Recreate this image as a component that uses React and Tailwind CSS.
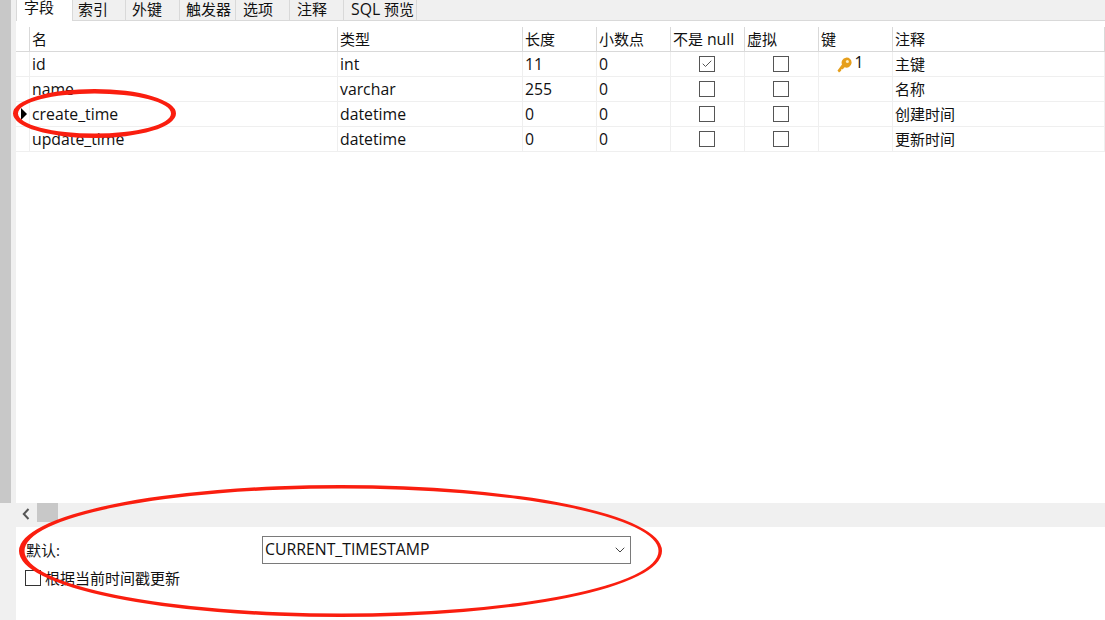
import { ChevronDown, Check } from 'lucide-react'

const tabs = [
  { label: '字段', width: 'w-[57px]', pad: 'pl-[7px]' },
  { label: '索引', width: 'w-[53px]', pad: 'pl-[5px]' },
  { label: '外键', width: 'w-[54px]', pad: 'pl-[6px]' },
  { label: '触发器', width: 'w-[56px]', pad: 'pl-[6px]' },
  { label: '选项', width: 'w-[54px]', pad: 'pl-[7px]' },
  { label: '注释', width: 'w-[54px]', pad: 'pl-[7px]' },
  { label: <span><span className="text-[15.8px]">SQL</span> 预览</span>, width: 'w-[73px]', pad: 'pl-[7px]' },
]

const headers = [
  '',
  '名',
  '类型',
  '长度',
  '小数点',
  <span>不是 <span className="text-[15.8px]">null</span></span>,
  '虚拟',
  '键',
  '注释',
]

const rows = [
  { name: 'id', type: 'int', len: '11', dec: '0', notNull: true, pk: true, note: '主键' },
  { name: 'name', type: 'varchar', len: '255', dec: '0', note: '名称' },
  { name: 'create_time', type: 'datetime', len: '0', dec: '0', current: true, note: '创建时间' },
  { name: 'update_time', type: 'datetime', len: '0', dec: '0', note: '更新时间' },
]

const cols = 'grid grid-cols-[14px_308px_185px_74px_74px_74px_74px_74px_1fr]'

function Box({ checked }) {
  return (
    <span className="w-4 h-4 border border-[#555555] flex items-center justify-center">
      {checked && <Check size={12} strokeWidth={2} className="text-[#555555]" />}
    </span>
  )
}

function Key() {
  return (
    <svg width="15" height="16" viewBox="0 0 15 16" className="mr-[2px] mt-[1px]">
      <path d="M0.5 13.5 L2 15.5 L4.2 13.8 L4.2 12.2 L5.8 12.2 L7.6 10.2 A5 5 0 1 0 5 7.6 Z" fill="#e69f1c" />
      <circle cx="10.4" cy="4.6" r="1.5" fill="#fdeec4" />
    </svg>
  )
}

function Row({ row }) {
  const cell = 'h-[25px] border-b border-r border-[#efefef] flex items-center overflow-hidden whitespace-nowrap'
  const text = cell + ' pl-[2px] pt-0.5 text-[15.8px]'
  return (
    <div className={cols}>
      <div className={cell}>
        {row.current && <span className="ml-[5px] w-0 h-0 border-y-[6px] border-y-transparent border-l-[6px] border-l-black" />}
      </div>
      <div className={text}>{row.name}</div>
      <div className={text}>{row.type}</div>
      <div className={text}>{row.len}</div>
      <div className={text}>{row.dec}</div>
      <div className={cell + ' justify-center pr-[2px]'}><Box checked={row.notNull} /></div>
      <div className={cell + ' justify-center pr-[2px]'}><Box /></div>
      <div className={cell + ' justify-center pr-[10px]'}>
        {row.pk && <><Key /><span className="-mt-0.5 text-[15.8px]">1</span></>}
      </div>
      <div className={cell + ' pl-[2px] pt-px'}>{row.note}</div>
    </div>
  )
}

export default function App() {
  return (
    <div className="relative w-[1105px] h-[620px] overflow-hidden bg-white flex text-[15px] leading-none text-[#111111] font-['Open_Sans','Noto_Sans_CJK_SC',sans-serif]">
      <aside className="w-4 shrink-0 bg-[#f0f0f0] flex">
        <div className="w-[11px] h-[503px] bg-[#c8c8c8]" />
      </aside>

      <main className="flex-1 flex flex-col min-w-0">
        <nav className="h-[21px] flex shrink-0 bg-[#f0f0f0] border-b border-[#d9d9d9]">
          {tabs.map((tab, i) => (
            <div
              key={i}
              className={`${tab.width} ${tab.pad} flex border-r border-[#d9d9d9] whitespace-nowrap ${i === 0 ? 'bg-white h-[21px] border-l' : 'pt-[2px]'}`}
            >
              {tab.label}
            </div>
          ))}
        </nav>

        <section className="flex-1 pt-[6px]">
          <div className={cols}>
            {headers.map((h, i) => (
              <div
                key={i}
                className="h-[25px] border-b border-[#d9d9d9] border-r flex items-center whitespace-nowrap pl-[2px] pt-px"
              >
                {h}
              </div>
            ))}
          </div>
          {rows.map(row => <Row key={row.name} row={row} />)}
        </section>

        <div className="h-[24px] shrink-0 bg-[#f0f0f0] flex items-start">
          <svg width="8" height="12" viewBox="0 0 8 12" className="ml-[6px] mt-[5px]" fill="none" stroke="#555555" strokeWidth="2">
            <path d="M6.5 1 L1.8 6 L6.5 11" />
          </svg>
          <div className="ml-[7px] w-[21px] h-[19px] bg-[#c8c8c8]" />
        </div>

        <section className="h-[93px] shrink-0 pt-[9px] pl-[10px]">
          <div className="flex items-center">
            <span className="w-[236px] pt-px">默认:</span>
            <div className="w-[369px] h-[28px] border border-[#7a7a7a] flex items-center justify-between pl-[2px] pr-[2px]">
              <span className="text-[15.8px]">CURRENT_TIMESTAMP</span>
              <ChevronDown size={16} strokeWidth={1.5} className="text-[#444444]" />
            </div>
          </div>
          <label className="flex items-center gap-[4px] mt-[6px] -ml-[1px]">
            <span className="w-[16px] h-[16px] border border-[#333333]" />
            根据当前时间戳更新
          </label>
        </section>
      </main>

      {/* red markers drawn over the screenshot, stroke is thicker at the sides */}
      <svg className="absolute inset-0 pointer-events-none" width="1105" height="620" fill="#fa1e0f" fillRule="evenodd">
        <path d="M13 113.5 A81.5 24.5 0 1 0 176 113.5 A81.5 24.5 0 1 0 13 113.5 Z M18 113.5 A76.5 20 0 1 1 171 113.5 A76.5 20 0 1 1 18 113.5 Z" />
        <path d="M19 551 A321.5 66 0 1 0 662 551 A321.5 66 0 1 0 19 551 Z M24.5 551 A317 62.5 0 1 1 658.5 551 A317 62.5 0 1 1 24.5 551 Z" />
      </svg>
    </div>
  )
}
